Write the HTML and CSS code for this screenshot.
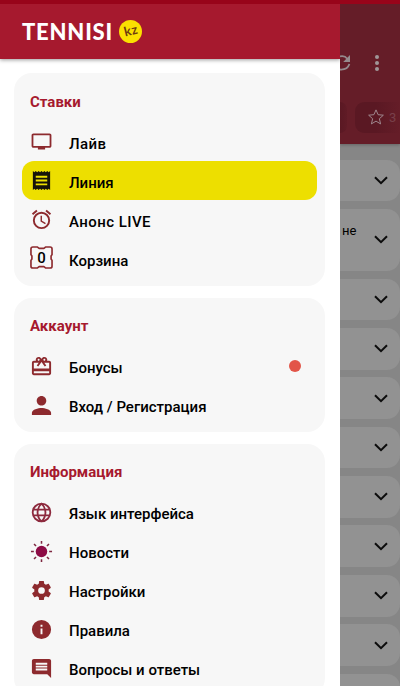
FILE: index.html
```html
<!DOCTYPE html>
<html lang="ru">
<head>
<meta charset="utf-8">
<title>Tennisi</title>
<link rel="stylesheet" href="styles.css">
</head>
<body>
<svg width="0" height="0" class="defs"><symbol id="chev" viewBox="0 0 14 9"><path d="M1 1.2 7 7.2 13 1.2" fill="none" stroke="#0c0c0c" stroke-width="2"/></symbol></svg>
<div class="status"></div>
<div class="app">
  <aside class="drawer">
    <header class="brand"><span class="logo">TENNISI</span><span class="kz"><span>kz</span></span></header>
    <nav class="menu">
      <section class="group">
        <h2>Ставки</h2>
        <a class="row"><svg class="small" viewBox="0 0 24 24"><path d="M21 3H3c-1.1 0-2 .9-2 2v12c0 1.1.9 2 2 2h5v2h8v-2h5c1.1 0 2-.9 2-2V5c0-1.1-.9-2-2-2zm0 14H3V5h18v12z"/></svg><span class="w-live">Лайв</span></a>
        <a class="row active"><svg viewBox="0 0 24 24"><path d="M19.5 3.5 18 2l-1.5 1.5L15 2l-1.500 1.500L12 2l-1.500 1.500L9 2 7.500 3.500 6 2 4.500 3.500 3 2v20l1.500-1.500L6 22l1.500-1.500L9 22l1.500-1.500L12 22l1.500-1.500L15 22l1.500-1.500L18 22l1.500-1.500L21 22V2zM18 17H6v-2h12zm0-4H6v-2h12zm0-4H6V7h12z"/></svg><span>Линия</span></a>
        <a class="row"><svg viewBox="0 0 24 24"><path d="M22 5.720l-4.600-3.860-1.290 1.530 4.600 3.860L22 5.720zM7.880 3.390 6.600 1.860 2 5.710l1.290 1.530 4.590-3.850zM12.500 8H11v6l4.750 2.850.75-1.230-4-2.370V8zM12 4a9 9 0 1 0 0 18 9 9 0 0 0 0-18zm0 16a7 7 0 1 1 0-14 7 7 0 0 1 0 14z"/></svg><span class="w-anons">Анонс LIVE</span></a>
        <a class="row"><span class="coupon"><svg viewBox="0 0 24 24"><path d="M3 1H7.500L9.500 2.500H14.500L16.500 1H21Q23 1 23 3V9L22 10.500V13.500L23 15V21Q23 23 21 23H16.500L14.500 21.500H9.500L7.500 23H3Q1 23 1 21V15L2 13.500V10.500L1 9V3Q1 1 3 1z"/></svg><b>0</b></span><span>Корзина</span></a>
      </section>
      <section class="group">
        <h2>Аккаунт</h2>
        <a class="row"><svg viewBox="0 0 24 24"><path d="M20 6h-2.180c.11-.31.18-.65.18-1 0-1.660-1.340-3-3-3-1.050 0-1.960.54-2.500 1.350l-.5.670-.5-.68C10.960 2.540 10.050 2 9 2 7.340 2 6 3.340 6 5c0 .35.07.69.18 1H4c-1.110 0-1.990.89-1.990 2L2 19c0 1.110.89 2 2 2h16c1.110 0 2-.89 2-2V8c0-1.110-.89-2-2-2zm-5-2c.55 0 1 .45 1 1s-.45 1-1 1-1-.45-1-1 .45-1 1-1zM9 4c.55 0 1 .45 1 1s-.45 1-1 1-1-.45-1-1 .45-1 1-1zm11 15H4v-2h16v2zm0-5H4V8h5.080L7 10.830 8.620 12 12 7.400l3.380 4.600L17 10.830 14.920 8H20v6z"/></svg><span>Бонусы</span><i class="dot"></i></a>
        <a class="row"><svg viewBox="0 0 24 24" class="person"><path d="M12 12c2.760 0 5-2.240 5-5s-2.240-5-5-5-5 2.240-5 5 2.240 5 5 5zm0 2.500c-3.340 0-10 1.670-10 5V22h20v-2.500c0-3.330-6.660-5-10-5z"/></svg><span class="w-login">Вход / Регистрация</span></a>
      </section>
      <section class="group">
        <h2 class="w-info">Информация</h2>
        <a class="row"><svg viewBox="0 0 24 24" class="globe"><path d="M12 2.800a9.200 9.200 0 1 0 0 18.400 9.200 9.200 0 0 0 0-18.400zM12 2.800c-5.500 5-5.500 13.400 0 18.400 5.500-5 5.500-13.400 0-18.400zM3.500 9h17M3.500 15h17"/></svg><span class="w-lang">Язык интерфейса</span></a>
        <a class="row"><svg viewBox="0 0 24 24" class="sun"><circle cx="12" cy="12" r="6"/><path d="M12 1v3M12 20v3M1 12h3M20 12h3M4.200 4.200l2.100 2.100M17.700 17.700l2.100 2.100M4.200 19.800l2.100-2.100M17.700 6.300l2.100-2.100"/></svg><span>Новости</span></a>
        <a class="row"><svg viewBox="0 0 24 24"><path d="M19.430 12.980c.04-.32.07-.64.07-.98s-.03-.66-.07-.98l2.110-1.650c.19-.15.24-.42.12-.64l-2-3.460c-.12-.22-.39-.3-.61-.22l-2.490 1c-.52-.4-1.080-.73-1.690-.98l-.38-2.650A.488.488 0 0 0 14 2h-4c-.25 0-.46.18-.49.42l-.38 2.650c-.61.25-1.170.59-1.690.98l-2.490-1c-.23-.09-.49 0-.61.22l-2 3.460c-.13.22-.07.49.12.64l2.110 1.650c-.04.32-.07.65-.07.98s.03.66.07.98l-2.110 1.650c-.19.15-.24.42-.12.64l2 3.460c.12.22.39.3.61.22l2.490-1c.52.4 1.080.73 1.690.98l.38 2.650c.03.24.24.42.49.42h4c.25 0 .46-.18.49-.42l.38-2.650c.61-.25 1.170-.59 1.690-.98l2.490 1c.23.09.49 0 .61-.22l2-3.460c.12-.22.07-.49-.12-.64zM12 15.500a3.500 3.500 0 1 1 0-7 3.500 3.500 0 0 1 0 7z"/></svg><span class="w-set">Настройки</span></a>
        <a class="row"><svg viewBox="0 0 24 24"><path d="M12 2a10 10 0 1 0 0 20 10 10 0 0 0 0-20zm1 15h-2v-6h2v6zm0-8h-2V7h2v2z"/></svg><span>Правила</span></a>
        <a class="row"><svg viewBox="0 0 24 24"><path d="M22 4c0-1.100-.9-2-2-2H4c-1.100 0-2 .9-2 2v12c0 1.100.9 2 2 2h14l4 4V4zm-4 10H6v-2h12v2zm0-3H6V9h12v2zm0-3H6V6h12v2z"/></svg><span class="w-faq">Вопросы и ответы</span></a>
      </section>
    </nav>
  </aside>
  <main class="page">
    <div class="top">
      <div class="tools">
        <svg class="sync" viewBox="0 0 11 18"><path d="M0 2.500Q4.500 1.200 7.500 5M9.400 10Q7.500 16 0 15.500" fill="none" stroke="#958b8d" stroke-width="1.800"/><path d="M10 1v7H3.200z" fill="#958b8d"/></svg>
        <svg class="dots" viewBox="0 0 4 16"><circle cx="2" cy="2" r="2"/><circle cx="2" cy="8" r="2"/><circle cx="2" cy="14" r="2"/></svg>
      </div>
      <div class="chips">
        <span class="chip-end"></span>
        <span class="chip"><svg viewBox="0 0 24 24"><path d="m12 2.500 2.800 6.400 7 .7-5.300 4.700 1.600 6.900-6.100-3.700-6.100 3.700 1.600-6.900L2.200 9.600l7-.7z"/></svg><span>3</span></span>
      </div>
    </div>
    <div class="list">
      <div class="item"><svg><use href="#chev"/></svg></div>
      <div class="item tall"><span>не</span><svg><use href="#chev"/></svg></div>
      <div class="item"><svg><use href="#chev"/></svg></div>
      <div class="item"><svg><use href="#chev"/></svg></div>
      <div class="item"><svg><use href="#chev"/></svg></div>
      <div class="item"><svg><use href="#chev"/></svg></div>
      <div class="item"><svg><use href="#chev"/></svg></div>
      <div class="item"><svg><use href="#chev"/></svg></div>
      <div class="item"><svg><use href="#chev"/></svg></div>
      <div class="item"><svg><use href="#chev"/></svg></div>
      <div class="item"></div>
    </div>
  </main>
</div>
</body>
</html>
```
FILE: styles.css
```css
* { box-sizing: border-box; }
body { margin: 0; height: 686px; overflow: hidden; font-family: Roboto, sans-serif; color: #000; display: flex; flex-direction: column; }
.defs { position: absolute; }
.status { height: 4px; flex: none; background: #98041a; }
.app { display: grid; grid-template-columns: 340px 60px; height: 682px; overflow: hidden; }
.drawer { background: #fff; height: 682px; overflow: hidden; }
.brand { height: 55px; background: #a6192e; box-shadow: 0 1px 4px rgba(0,0,0,.4); display: flex; align-items: center; padding-left: 22px; }
.logo { font: 900 22px/26px Lato, sans-serif; color: #fff; width: 97px; white-space: nowrap; letter-spacing: .8px; }
.kz { width: 23px; height: 23px; border-radius: 50%; background: #fbe000; color: #6d3a10; display: flex; align-items: center; justify-content: center; font: 700 13px/13px Lato, sans-serif; }
.kz span { transform: rotate(-14deg); margin-top: -2px; letter-spacing: .5px; }
.menu { padding: 14px 15px 0 14px; display: flex; flex-direction: column; gap: 12px; }
.group { background: #f7f7f7; border-radius: 18px; padding: 0 8px 7.500px; flex: none; }
.group h2 { margin: 0; height: 49px; padding: 19px 8px 0; font-size: 15px; line-height: 19px; font-weight: 700; color: #a6192e; }
.group:first-child h2 { padding-top: 19.500px; }
.row { height: 39px; display: flex; align-items: center; padding: 0 16px 0 8px; border-radius: 12px; }
.row > svg, .coupon { width: 23px; height: 23px; fill: #8d2a2e; flex: none; }
.row > svg.small { padding: .7px; }
.row > span:not(.coupon) { margin-left: 16px; font-size: 15px; line-height: 20px; font-weight: 500; padding-top: 3px; white-space: nowrap; }
.group:first-child .row > span:not(.coupon) { padding-top: 4px; }
.row > span.w-live { letter-spacing: .4px; }
.row > span.w-anons { letter-spacing: .45px; }
.row.active { background: #eddf00; margin-right: .5px; }
.row.active > svg { fill: #16130a; }
.row .dot { width: 12px; height: 12px; border-radius: 50%; background: #e25548; margin: -1px 0 0 auto; }
.row svg.globe { fill: none; stroke: #8d2a3e; stroke-width: 1.900; }
.row svg.sun { fill: #8d0b45; stroke: #7e2740; stroke-width: 1.600; }
.sun circle { stroke: none; }
.row .coupon { display: grid; place-items: center; margin-top: -2px; }
.coupon svg, .coupon b { grid-area: 1 / 1; }
.coupon svg { width: 23px; height: 23px; fill: none; stroke: #8d2a2e; stroke-width: 1.700; stroke-linejoin: round; }
.coupon b { font-size: 15px; line-height: 18px; font-weight: 500; }

.page { background: #868686; height: 682px; overflow: hidden; }
.top { height: 139.500px; background: #651d28; box-shadow: 0 1px 3px rgba(0,0,0,.25); padding-top: 49px; }
.tools { display: flex; height: 20px; align-items: center; }
.sync { width: 11px; height: 18px; }
.dots { width: 4px; height: 16px; margin-left: 24px; fill: #a09698; }
.chips { display: flex; gap: 8px; margin-top: 28.500px; height: 31px; }
.chip-end { width: 7px; background: linear-gradient(90deg, #5a1823, #601b26); border-radius: 0 9px 9px 0; }
.chip { flex: 1; background: linear-gradient(90deg, #5a1823 45%, #651d28); border-radius: 9px 0 0 9px; display: flex; align-items: center; padding-left: 12px; }
.chip svg { width: 18px; height: 18px; fill: none; stroke: #a08a90; stroke-width: 1.300; flex: none; }
.chip span { color: #78404a; font-size: 13px; margin-left: 4px; }
.list { padding-top: 16px; display: flex; flex-direction: column; gap: 7.700px; }
.item { height: 41.700px; flex: none; background: #929292; border-radius: 0 13px 13px 0; display: flex; align-items: center; justify-content: flex-end; padding-right: 12px; }
.item svg { width: 14px; height: 9px; }
.item.tall { height: 62px; }
.item span { font-size: 13px; margin: -18px auto 0 2px; }
```
